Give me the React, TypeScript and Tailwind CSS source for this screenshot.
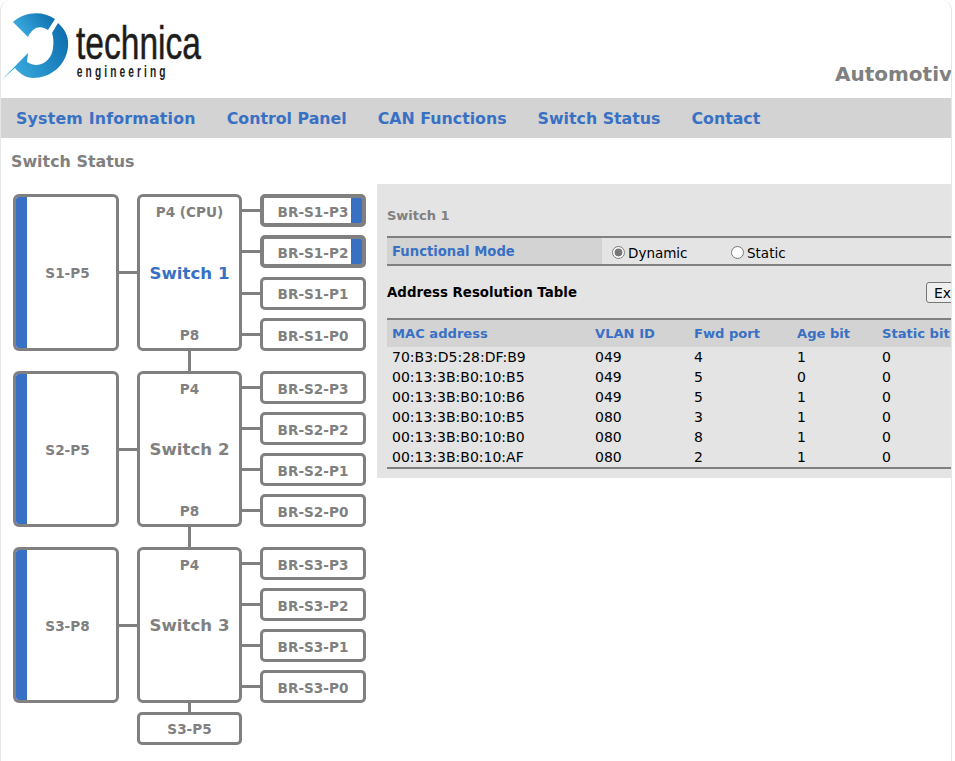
const nav = ['System Information', 'Control Panel', 'CAN Functions', 'Switch Status', 'Contact'];

const switches = [
  { name: 'Switch 1', top: 'P4 (CPU)', bottom: 'P8', side: 'S1-P5', active: true, bridges: [['BR-S1-P3', true], ['BR-S1-P2', true], ['BR-S1-P1', false], ['BR-S1-P0', false]] },
  { name: 'Switch 2', top: 'P4', bottom: 'P8', side: 'S2-P5', active: false, bridges: [['BR-S2-P3', false], ['BR-S2-P2', false], ['BR-S2-P1', false], ['BR-S2-P0', false]] },
  { name: 'Switch 3', top: 'P4', bottom: '', side: 'S3-P8', active: false, bridges: [['BR-S3-P3', false], ['BR-S3-P2', false], ['BR-S3-P1', false], ['BR-S3-P0', false]] },
] as const;

const rows = [
  ['70:B3:D5:28:DF:B9', '049', '4', '1', '0'],
  ['00:13:3B:B0:10:B5', '049', '5', '0', '0'],
  ['00:13:3B:B0:10:B6', '049', '5', '1', '0'],
  ['00:13:3B:B0:10:B5', '080', '3', '1', '0'],
  ['00:13:3B:B0:10:B0', '080', '8', '1', '0'],
  ['00:13:3B:B0:10:AF', '080', '2', '1', '0'],
];

function Logo() {
  return (
    <svg width="205" height="84" viewBox="0 0 205 84" className="block">
      <defs>
        <linearGradient id="ring" x1="0" y1="0.7" x2="1" y2="0.3">
          <stop offset="0" stopColor="#3fb0e2" />
          <stop offset="1" stopColor="#0e70b0" />
        </linearGradient>
      </defs>
      <path fill="url(#ring)" d="M13 22 C24 12 42 10 55 19 L48 30 C40 25 33 27 28 37 Z" />
      <path fill="url(#ring)" d="M58 23 C66 30 69 38 68 47 C66 66 50 78 33 78 C26 78 20 74 15 68 L1.5 80 L28 53 L27 62 C40 70 52 60 53 48 C54 41 53 36 52 33 Z" />
      <text x="76" y="59" fontFamily="'Liberation Sans', sans-serif" fontSize="46" fill="#1d1d1b" stroke="#1d1d1b" strokeWidth="0.5" textLength="125" lengthAdjust="spacingAndGlyphs">technica</text>
      <g transform="scale(0.6 1)">
        <text x="128" y="77" fontFamily="'Liberation Sans', sans-serif" fontSize="17" fontWeight="700" fill="#1d1d1b" textLength="148" lengthAdjust="spacing">engineering</text>
      </g>
    </svg>
  );
}

function Bridge({ label, on }: { label: string; on: boolean }) {
  return (
    <div className="flex items-center">
      <div className="h-[3px] w-[18px] bg-[#808080]" />
      <div className={`relative flex h-[33px] w-[106px] items-center justify-center overflow-hidden rounded-[5px] border-[#808080] pt-[3px] text-[13.6px] font-bold text-[#808080] ${on ? 'border-4' : 'border-[3px]'}`}>
        {label}
        {on && <span className="absolute inset-y-0 right-0 w-[11px] bg-[#3871c4]" />}
      </div>
    </div>
  );
}

function SwitchRow({ sw, height }: { sw: (typeof switches)[number]; height: string }) {
  return (
    <div className={`flex items-stretch ${height}`}>
      <div className="flex w-[106px] overflow-hidden rounded-[6px] border-[3px] border-[#808080]">
        <div className="w-[11px] bg-[#3871c4]" />
        <div className="flex flex-1 items-center justify-center pt-[2px] pr-[8px] text-[13.6px] font-bold text-[#808080]">{sw.side}</div>
      </div>
      <div className="flex w-[18px] items-center">
        <div className="h-[3px] w-full bg-[#808080]" />
      </div>
      <div className="flex w-[105px] flex-col items-center justify-between rounded-[6px] border-[3px] border-[#808080] pt-[5px] pb-[3px] text-[13.6px] leading-5 font-bold text-[#808080]">
        <div>{sw.top}</div>
        <div className={`text-[16.6px] ${sw.active ? 'text-[#3871c4]' : ''}`}>{sw.name}</div>
        <div className="h-5">{sw.bottom}</div>
      </div>
      <div className="flex flex-col justify-between">
        {sw.bridges.map(([label, on]) => (
          <Bridge key={label} label={label} on={on} />
        ))}
      </div>
    </div>
  );
}

export default function App() {
  return (
    <div className="h-[761px] w-[952px] overflow-hidden rounded-t-[10px] border-x border-[#e6e6e6] bg-white font-['DejaVu_Sans',sans-serif]">
      {/* Header */}
      <div className="flex h-[98px] whitespace-nowrap">
        <div className="w-[834px] shrink-0"><div className="-ml-px"><Logo /></div></div>
        <div className="pt-[62px] text-[20px] leading-6 font-bold text-[#808080]">Automotive</div>
      </div>

      {/* Nav */}
      <div className="flex h-10 items-center gap-[31px] bg-[#d3d3d3] pt-[2px] pl-[15px] text-[15.8px] font-bold text-[#3871c4]">
        <span className="tracking-[0.2px]">{nav[0]}</span>
        {nav.slice(1).map((item) => (
          <span key={item}>{item}</span>
        ))}
      </div>

      <div className="pt-[14px] pl-[10px] text-[15.9px] leading-5 font-bold text-[#808080]">Switch Status</div>

      <div className="flex pt-[12px]">
        {/* Diagram */}
        <div className="w-[376px] shrink-0 pt-[10px] pl-[12px]">
          <SwitchRow sw={switches[0]} height="h-[157px]" />
          <div className="ml-[175px] h-5 w-[3px] bg-[#808080]" />
          <SwitchRow sw={switches[1]} height="h-[156px]" />
          <div className="ml-[175px] h-5 w-[3px] bg-[#808080]" />
          <SwitchRow sw={switches[2]} height="h-[156px]" />
          <div className="ml-[175px] h-[9px] w-[3px] bg-[#808080]" />
          <div className="ml-[124px] flex h-[33px] w-[105px] items-center justify-center rounded-[5px] border-[3px] border-[#808080] pt-px text-[13.6px] font-bold text-[#808080]">S3-P5</div>
        </div>

        {/* Switch panel */}
        <div className="h-[294px] w-[574px] shrink-0 overflow-hidden bg-[#e4e4e4] pl-[10px]">
          <div className="pt-[24px] pb-[12px] text-[13px] leading-[16px] font-bold text-[#808080]">Switch 1</div>
          <div className="flex h-[30px] w-[700px] border-y-[2px] border-[#808080]">
            <div className="flex w-[215px] items-center bg-[#d3d3d3] pt-px pl-[5px] text-[13.2px] font-bold text-[#3871c4]">Functional Mode</div>
            <label className="flex w-[129px] items-center pt-[4px] pl-[10px] text-[13.5px] text-black">
              <input type="radio" name="mode" defaultChecked className="mr-[3px] -translate-y-px accent-[#777777]" />
              Dynamic
            </label>
            <label className="flex items-center pt-[4px] text-[13.5px] text-black">
              <input type="radio" name="mode" className="mr-[3px] -translate-y-px" />
              Static
            </label>
          </div>
          <div className="flex h-[52px] w-[700px] items-center">
            <div className="w-[539px] pt-[3px] text-[13.35px] font-bold text-black">Address Resolution Table</div>
            <button className="h-[21px] w-[60px] rounded-[3px] border border-[#767676] bg-[#efefef] pl-[7px] text-left text-[14px] text-black">Export</button>
          </div>
          <table className="w-[700px] table-fixed border-collapse border-b-[2px] border-[#808080] text-left">
            <colgroup>
              <col className="w-[203px]" />
              <col className="w-[99px]" />
              <col className="w-[103px]" />
              <col className="w-[85px]" />
              <col />
            </colgroup>
            <thead>
              <tr className="h-[28px] border-t-[2px] border-[#808080] bg-[#d3d3d3] text-[13.1px] text-[#3871c4]">
                <th className="pl-[5px] font-bold">MAC address</th>
                <th className="pl-[5px] font-bold">VLAN ID</th>
                <th className="pl-[5px] font-bold">Fwd port</th>
                <th className="pl-[5px] font-bold">Age bit</th>
                <th className="pl-[5px] font-bold">Static bit</th>
              </tr>
            </thead>
            <tbody className="text-[14px] text-black">
              {rows.map((row, i) => (
                <tr key={i} className="h-5">
                  {row.map((cell, j) => (
                    <td key={j} className="pt-px pl-[5px] leading-[19px]">{cell}</td>
                  ))}
                </tr>
              ))}
            </tbody>
          </table>
        </div>
      </div>
    </div>
  );
}
